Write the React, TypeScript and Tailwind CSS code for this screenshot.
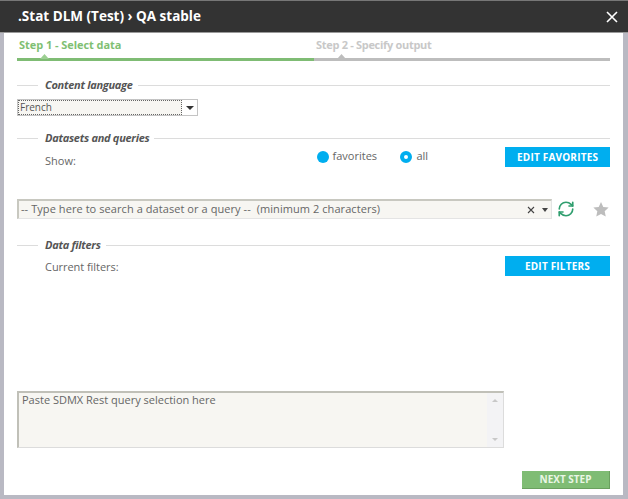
import React from "react";
import { RefreshCw } from "lucide-react";

const font = "font-['Open_Sans','Noto_Sans',sans-serif]";

const Legend: React.FC<{ title: string; className?: string }> = ({ title, className }) => {
  return (
    <div className={`flex items-center h-4 ${className ?? ""}`}>
      <div className="w-[21px] h-px bg-[#dcdcdc]"></div>
      <div className="ml-[7px] mr-[5px] text-[11px] font-bold italic tracking-[-0.28px] text-[#555] whitespace-nowrap">{title}</div>
      <div className="flex-1 h-px bg-[#dcdcdc]"></div>
    </div>
  );
};

const Caret: React.FC<{ className: string }> = ({ className }) => (
  <svg width="9" height="5" viewBox="0 0 9 5" className={className}>
    <path d="M0 5 L4.5 0 L9 5 Z" fill="currentColor" />
  </svg>
);

const BlueButton: React.FC<{ label: string }> = ({ label }) => (
  <button className="w-[105px] h-[20px] bg-[#00aeef] text-white text-[10px] font-bold tracking-[0.2px] flex items-center justify-center">
    {label}
  </button>
);

export default function App() {
  return (
    <div className={`w-[628px] h-[499px] bg-white flex flex-col ${font}`}>
      <div className="h-[33px] shrink-0 bg-[#333333] border-t border-t-[#777] border-b border-b-[#9a9a9a] flex items-center justify-between pl-[18px] pr-[10px]">
        <div className="text-white text-[13.5px] font-bold">.Stat DLM (Test) › QA stable</div>
        <svg width="12" height="12" viewBox="0 0 12 12">
          <path d="M1 1 L11 11 M11 1 L1 11" stroke="#fff" strokeWidth="1.6" />
        </svg>
      </div>

      <div className="flex-1 flex flex-col min-h-0 border-l-4 border-r-[5px] border-b-4 border-[#b9b9c3] bg-white pl-[13px] pr-[13px] pb-[6px]">
        {/* steps */}
        <div className="flex mt-[2px] text-[11px] font-bold">
          <div className="w-[297px]">
            <div className="h-[23px] pl-[2px] flex items-center pb-[2px] text-[#7fbf73] tracking-[-0.05px]">Step 1 - Select data</div>
            <div className="relative h-[3px] bg-[#7fbc74]">
              <Caret className="absolute left-[23px] -top-[4px] text-[#9ccf92]" />
            </div>
          </div>
          <div className="flex-1">
            <div className="h-[23px] pl-[2px] flex items-center pb-[2px] text-[#c8c8c8] tracking-[-0.3px]">Step 2 - Specify output</div>
            <div className="relative h-[3px] bg-[#bdbdbd]">
              <Caret className="absolute left-[23px] -top-[4px] text-[#bdbdbd]" />
            </div>
          </div>
        </div>

        <Legend title="Content language" className="mt-[16px]" />
        <div className="mt-[6px] w-[181px] h-[17px] flex bg-[#f7f6f2] border border-[#c4c4c4]">
          <div className="flex-1 border border-dotted border-[#666] text-[10px] leading-[13px] pl-[1px] text-[#555]">French</div>
          <div className="w-[15px] bg-white flex items-center justify-center">
            <div className="w-0 h-0 border-x-[4px] border-x-transparent border-t-[4px] border-t-[#333]"></div>
          </div>
        </div>

        <Legend title="Datasets and queries" className="mt-[14px]" />
        <div className="flex items-center h-[20px] mt-[1px] text-[11px] text-[#666]">
          <div className="ml-[28px] w-[272px] mt-[8px]">Show:</div>
          <div className="flex items-center gap-[4px] w-[84px] mb-[1px]">
            <div className="w-3 h-3 rounded-full bg-[#00aeef]"></div>
            <span>favorites</span>
          </div>
          <div className="flex items-center gap-[4px] w-[105px] mb-[1px]">
            <div className="w-3 h-3 rounded-full border-[4px] border-[#00aeef] bg-white"></div>
            <span>all</span>
          </div>
          <BlueButton label="EDIT FAVORITES" />
        </div>

        <div className="flex items-center mt-[32px]">
          <div className="w-[535px] h-[20px] flex items-center bg-[#f7f6f2] border-t-2 border-l-2 border-[#c8c8c0] border-b border-r border-b-[#e4e4e4] border-r-[#e4e4e4]">
            <div className="flex-1 pl-[2px] text-[11px] tracking-[0.07px] text-[#666] whitespace-pre">-- Type here to search a dataset or a query --  (minimum 2 characters)</div>
            <svg width="8" height="8" viewBox="0 0 8 8" className="mr-[7px]">
              <path d="M1 1 L7 7 M7 1 L1 7" stroke="#444" strokeWidth="1.1" />
            </svg>
            <div className="mr-[3px] w-0 h-0 border-x-[3.5px] border-x-transparent border-t-[4px] border-t-[#444]"></div>
          </div>
          <RefreshCw size={18} strokeWidth={2.2} className="ml-[5px] text-[#2f9e6e]" />
          <svg width="18" height="17" viewBox="0 0 24 24" className="ml-[17px]">
            <path d="M12 1.5 L15.2 8.4 L22.8 9.3 L17.2 14.5 L18.7 22 L12 18.2 L5.3 22 L6.8 14.5 L1.2 9.3 L8.8 8.4 Z" fill="#bdbdbd" />
          </svg>
        </div>

        <Legend title="Data filters" className="mt-[18px]" />
        <div className="flex items-center justify-between h-[20px] mt-[3px] text-[11px] text-[#666]">
          <div className="ml-[28px] mt-[2px] tracking-[-0.05px]">Current filters:</div>
          <BlueButton label="EDIT FILTERS" />
        </div>

        <div className="mt-[115px] w-[487px] h-[57px] flex bg-[#f7f6f2] border-t-2 border-l-2 border-[#c0c0b8] border-b border-r border-b-[#dcdcdc] border-r-[#dcdcdc]">
          <div className="flex-1 pl-[3px] text-[11px] leading-[14px] text-[#666]">Paste SDMX Rest query selection here</div>
          <div className="w-[16px] bg-[#f3f3f5] flex flex-col items-center justify-between py-[6px]">
            <div className="w-0 h-0 border-x-[3px] border-x-transparent border-b-[3px] border-b-[#c8c8c8]"></div>
            <div className="w-0 h-0 border-x-[3px] border-x-transparent border-t-[3px] border-t-[#c8c8c8]"></div>
          </div>
        </div>

        <div className="flex justify-end mt-[auto]">
          <button className="w-[88px] h-[18px] bg-[#7fbc74] border-r border-b border-[#6aa05f] text-[#eaf6e6] text-[10px] font-bold flex items-center justify-center">
            NEXT STEP
          </button>
        </div>
      </div>
    </div>
  );
}
